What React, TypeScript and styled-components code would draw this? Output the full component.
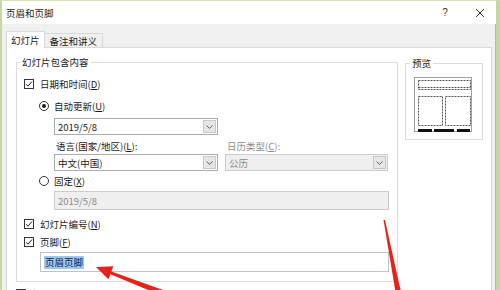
import { createGlobalStyle, styled } from "styled-components";

const GlobalStyle = createGlobalStyle`
  html, body {
    margin: 0;
    padding: 0;
    background: #ffffff;
  }
  body {
    width: 500px;
    height: 290px;
    overflow: hidden;
    font-family: "Noto Sans CJK SC", "Liberation Sans", sans-serif;
    font-size: 9.5px;
    color: #1a1a1a;
  }
`;

const Window = styled.div`
  position: relative;
  width: 500px;
  height: 290px;
  box-sizing: border-box;
  border-left: 2px solid #c5d7a4;
  border-right: 4px solid #c5d7a4;
  border-top: 1px solid #d4e2bb;
  display: flex;
  flex-direction: column;
  overflow: hidden;
`;

const TitleBar = styled.div`
  height: 23px;
  flex: none;
  background: #ffffff;
  display: flex;
  align-items: center;
  padding-left: 4px;
  line-height: 12px;
`;

const TitleButtons = styled.div`
  margin-left: auto;
  display: flex;
  align-items: center;
  gap: 25px;
  padding-right: 11px;
`;

const HelpButton = styled.span`
  width: 10px;
  text-align: center;
  font-family: "Liberation Sans", sans-serif;
  font-size: 10px;
  color: #333;
`;

const Body = styled.div`
  flex: 1;
  display: flex;
  flex-direction: column;
  background: #f0f0f0;
  padding: 7px 3px 0 4px;
  border-right: 1px solid #b4b4b4;
  min-height: 0;
`;

const TabStrip = styled.div`
  display: flex;
  align-items: flex-end;
  height: 16px;
  flex: none;
`;

const Tab = styled.div<{ $active?: boolean }>`
  position: relative;
  z-index: 1;
  box-sizing: border-box;
  height: ${(p) => (p.$active ? 17 : 14)}px;
  margin-bottom: ${(p) => (p.$active ? -1 : 0)}px;
  padding: 0 ${(p) => (p.$active ? 4 : 5)}px;
  display: flex;
  align-items: center;
  background: ${(p) => (p.$active ? "#ffffff" : "#f0f0f0")};
  border: 1px solid #d9d9d9;
  border-bottom: none;
  ${(p) => (p.$active ? "" : "border-left: none;")}
`;

const Panel = styled.div`
  flex: 1;
  background: #ffffff;
  border: 1px solid #d9d9d9;
  padding: 8px 8px 0 9px;
  display: flex;
  gap: 7px;
  align-items: flex-start;
`;

const Column = styled.div`
  display: flex;
  flex-direction: column;
`;

const Group = styled.fieldset<{ $width: number }>`
  width: ${(p) => p.$width}px;
  box-sizing: border-box;
  margin: 0;
  padding: 0 8px 9px 7px;
  border: 1px solid #dcdcdc;
  min-width: 0;
  display: flex;
  flex-direction: column;
`;

const PreviewGroup = styled(Group)`
  margin-top: 1px;
  padding: 0 8px 7px 8px;
`;

const Legend = styled.legend`
  margin-left: -4px;
  padding: 0 2px;
  line-height: 12px;
`;

const Row = styled.div<{ $top: number; $indent?: number }>`
  display: flex;
  align-items: center;
  gap: 6px;
  height: 16px;
  margin-top: ${(p) => p.$top}px;
  margin-left: ${(p) => p.$indent ?? 0}px;
  white-space: nowrap;
`;

const RadioRow = styled(Row)`
  gap: 5px;
`;

const Box = styled.span`
  width: 10px;
  height: 10px;
  box-sizing: border-box;
  border: 1px solid #333333;
  background: #ffffff;
  display: flex;
  align-items: center;
  justify-content: center;
  flex: none;
`;

const RadioCircle = styled.span<{ $on?: boolean }>`
  width: 10px;
  height: 10px;
  box-sizing: border-box;
  border: 1px solid #333333;
  border-radius: 50%;
  background: #ffffff;
  display: flex;
  align-items: center;
  justify-content: center;
  flex: none;
  &::after {
    content: "";
    width: 4px;
    height: 4px;
    border-radius: 50%;
    background: ${(p) => (p.$on ? "#1a1a1a" : "transparent")};
  }
`;

const U = styled.span`
  text-decoration: underline;
`;

const Pair = styled.div<{ $top: number }>`
  display: grid;
  grid-template-columns: 164px 163px;
  column-gap: 7px;
  margin-left: 30px;
  margin-top: ${(p) => p.$top}px;
`;

const FieldLabel = styled.div<{ $muted?: boolean }>`
  height: 12px;
  line-height: 12px;
  padding-left: 2px;
  color: ${(p) => (p.$muted ? "#8c8c8c" : "#1a1a1a")};
  white-space: nowrap;
`;

const Combo = styled.div<{ $disabled?: boolean }>`
  box-sizing: border-box;
  height: 17px;
  border: 1px solid ${(p) => (p.$disabled ? "#cccccc" : "#acacac")};
  background: ${(p) => (p.$disabled ? "#efefef" : "#ffffff")};
  color: ${(p) => (p.$disabled ? "#8a8a8a" : "#1a1a1a")};
  display: flex;
  align-items: center;
  padding-left: 3px;
`;

const ComboText = styled.span`
  flex: 1;
`;

const ArrowButton = styled.span`
  width: 13px;
  height: 13px;
  box-sizing: border-box;
  margin-right: 1px;
  border: 1px solid #c8c8c8;
  background: #e6e6e6;
  display: flex;
  align-items: center;
  justify-content: center;
`;

const TextBox = styled.div<{ $disabled?: boolean; $indent: number; $top: number; $height: number }>`
  box-sizing: border-box;
  height: ${(p) => p.$height}px;
  margin-left: ${(p) => p.$indent}px;
  margin-top: ${(p) => p.$top}px;
  border: 1px solid ${(p) => (p.$disabled ? "#cccccc" : "#c2c2c2")};
  background: ${(p) => (p.$disabled ? "#efefef" : "#ffffff")};
  color: ${(p) => (p.$disabled ? "#8a8a8a" : "#1a1a1a")};
  display: flex;
  align-items: center;
  padding-left: 3px;
`;

const Selected = styled.span`
  background: #9fc6ea;
  color: #0b1d48;
  line-height: 13px;
  padding: 0 1px;
`;

const PreviewPicture = styled.svg`
  display: block;
  margin-top: 8px;
`;

const Overlay = styled.svg`
  position: absolute;
  left: -2px;
  top: -1px;
  pointer-events: none;
`;

const Check = () => (
  <Box>
    <svg width="8" height="8" viewBox="0 0 8 8">
      <path d="M1 4.2 L3 6.2 L7 1.5" fill="none" stroke="#1a1a1a" strokeWidth="1" />
    </svg>
  </Box>
);

const Chevron = () => (
  <svg width="7" height="4" viewBox="0 0 7 4">
    <path d="M0.5 0.5 L3.5 3.3 L6.5 0.5" fill="none" stroke="#606060" strokeWidth="1" />
  </svg>
);

const Dropdown = ({ value, disabled }: { value: string; disabled?: boolean }) => (
  <Combo $disabled={disabled}>
    <ComboText>{value}</ComboText>
    <ArrowButton>
      <Chevron />
    </ArrowButton>
  </Combo>
);

const Preview = () => (
  <PreviewPicture width="58" height="55" viewBox="0 0 58 55">
    <rect x="0.5" y="0.5" width="57" height="54" fill="#ffffff" stroke="#a0a0a0" />
    <g fill="none" stroke="#555555" strokeWidth="1" strokeDasharray="2 1">
      <rect x="4.5" y="3.5" width="52" height="9" />
      <line x1="4.5" y1="10.5" x2="56.5" y2="10.5" />
      <rect x="4.5" y="19.5" width="24" height="29" />
      <rect x="31.5" y="19.5" width="25" height="29" />
    </g>
    <g fill="#111111">
      <rect x="4" y="52" width="14" height="3" />
      <rect x="20" y="52" width="20" height="3" />
      <rect x="43" y="52" width="13" height="3" />
    </g>
  </PreviewPicture>
);

export default function App() {
  return (
    <>
      <GlobalStyle />
      <Window>
        <TitleBar>
          页眉和页脚
          <TitleButtons>
            <HelpButton>?</HelpButton>
            <svg width="10" height="10" viewBox="0 0 10 10">
              <path d="M1 1 L9 9 M9 1 L1 9" stroke="#333333" strokeWidth="1" />
            </svg>
          </TitleButtons>
        </TitleBar>
        <Body>
          <TabStrip>
            <Tab $active>幻灯片</Tab>
            <Tab>备注和讲义</Tab>
          </TabStrip>
          <Panel>
            <Column>
              <Group $width={382}>
                <Legend>幻灯片包含内容</Legend>
                <Row $top={8}>
                  <Check />
                  <span>
                    日期和时间(<U>D</U>)
                  </span>
                </Row>
                <RadioRow $top={6} $indent={15}>
                  <RadioCircle $on />
                  <span>
                    自动更新(<U>U</U>)
                  </span>
                </RadioRow>
                <Pair $top={4}>
                  <Dropdown value="2019/5/8" />
                </Pair>
                <Pair $top={5}>
                  <FieldLabel>
                    语言(国家/地区)(<U>L</U>):
                  </FieldLabel>
                  <FieldLabel $muted>
                    日历类型(<U>C</U>):
                  </FieldLabel>
                </Pair>
                <Pair $top={2}>
                  <Dropdown value="中文(中国)" />
                  <Dropdown value="公历" disabled />
                </Pair>
                <RadioRow $top={2} $indent={15}>
                  <RadioCircle />
                  <span>
                    固定(<U>X</U>)
                  </span>
                </RadioRow>
                <TextBox $disabled $indent={30} $top={2} $height={19}>
                  2019/5/8
                </TextBox>
                <Row $top={6}>
                  <Check />
                  <span>
                    幻灯片编号(<U>N</U>)
                  </span>
                </Row>
                <Row $top={2}>
                  <Check />
                  <span>
                    页脚(<U>F</U>)
                  </span>
                </Row>
                <TextBox $indent={16} $top={2} $height={20}>
                  <Selected>页眉页脚</Selected>
                </TextBox>
              </Group>
              <Row $top={4}>
                <Check />
                <span>
                  标题幻灯片中不显示(<U>S</U>)
                </span>
              </Row>
            </Column>
            <PreviewGroup $width={78}>
              <Legend>预览</Legend>
              <Preview />
            </PreviewGroup>
          </Panel>
        </Body>
        <Overlay width="500" height="290" viewBox="0 0 500 290">
          <polygon
            points="96,267 113.4,266.3 111.4,271.4 169.1,292.2 166.9,297.8 110.4,274.2 108.4,279.3"
            fill="#e5231b"
          />
          <polygon points="383.5,220 385,220 401,292 395.5,292" fill="#e5231b" />
        </Overlay>
      </Window>
    </>
  );
}
